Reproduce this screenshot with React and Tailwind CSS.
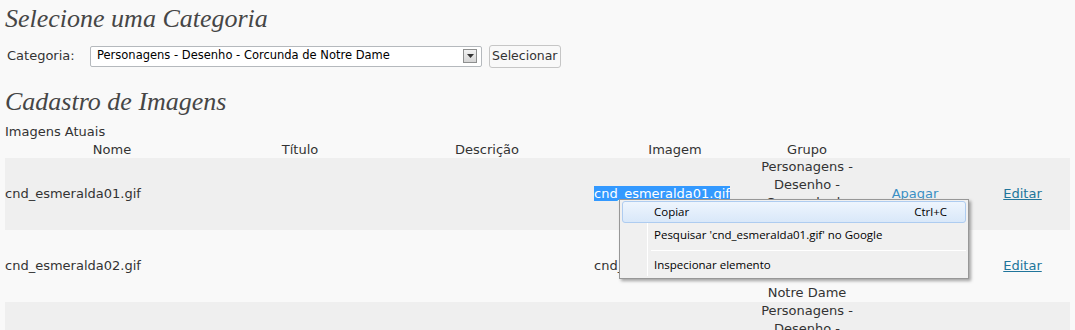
import React from 'react'

const body = { fontFamily: '"DejaVu Sans", Verdana, sans-serif' }
const serif = { fontFamily: '"Liberation Serif", Georgia, serif' }
const menuFont = { fontFamily: '"Open Sans", "Noto Sans", sans-serif' }

const cols = 'grid grid-cols-[214px_162px_212px_164px_100px_116px_99px]'

const rows = [
  { file: 'cnd_esmeralda01.gif', bg: 'bg-[#efefef]', selected: true },
  { file: 'cnd_esmeralda02.gif', bg: 'bg-[#f9f9f9]' },
  { file: 'cnd_esmeralda03.gif', bg: 'bg-[#efefef]' },
]

function Row({ r }) {
  return (
    <div className={`${cols} ${r.bg} h-[72px] items-center leading-[18px]`}>
      <div>{r.file}</div>
      <div />
      <div />
      <div className="pl-px">
        {r.selected ? <span className="bg-[#3399ff] text-white">{r.file}</span> : r.file}
      </div>
      <div className="text-center whitespace-nowrap">
        Personagens -<br />Desenho -<br />Corcunda de<br />Notre Dame
      </div>
      <div className="text-center">
        <a className="text-[#3a8fc4] underline">Apagar</a>
      </div>
      <div className="text-center">
        <a className="text-[#21759b] underline">Editar</a>
      </div>
    </div>
  )
}

function ContextMenu() {
  return (
    <div className="absolute left-[619px] top-[199px] w-[350px] border border-[#979797] bg-[#f0f0f0] shadow-[2px_2px_3px_rgba(0,0,0,0.35)] text-[11.5px] text-black px-[2px] pt-px pb-[2px]" style={menuFont}>
      <div className="absolute left-[27px] top-[2px] bottom-[2px] w-px bg-[#e2e3e3] border-r border-white" />
      <div className="relative h-[22px] flex items-center justify-between pl-[31px] pr-[18px] rounded-[3px] border border-[#aeccf0] bg-gradient-to-b from-[#eef5fd] to-[#d9e8f9]">
        <span>Copiar</span><span>Ctrl+C</span>
      </div>
      <div className="relative h-[24px] flex items-center pl-[32px]">Pesquisar 'cnd_esmeralda01.gif' no Google</div>
      <div className="relative h-[7px] flex items-center ml-[29px]">
        <div className="w-full h-px bg-[#e2e3e3] border-b border-white" />
      </div>
      <div className="relative h-[22px] flex items-center pl-[32px]">Inspecionar elemento</div>
    </div>
  )
}

export default function App() {
  return (
    <div className="relative w-[1075px] h-[330px] overflow-hidden bg-[#f9f9f9] text-[#333] text-[13px]" style={body}>
      <div className="px-[5px]">
        <h1 className="italic text-[#464646] text-[26px] pt-[4px] leading-[30px]" style={serif}>Selecione uma Categoria</h1>
        <div className="flex items-center h-[24px] mt-[10px]">
          <span className="ml-[2px] w-[83px]">Categoria:</span>
          <div className="w-[392px] h-[21px] border border-[#b5b9bd] bg-white rounded-[2px] flex items-center justify-between pl-[6px] pr-[4px] text-[11.5px] text-black">
            <span>Personagens - Desenho - Corcunda de Notre Dame</span>
            <div className="w-[14px] h-[14px] border border-[#8e8f8f] bg-gradient-to-b from-[#f2f2f2] to-[#d5d5d5] flex items-center justify-center">
              <svg width="7" height="4" viewBox="0 0 7 4"><path d="M0 0h7L3.5 4z" fill="#333" /></svg>
            </div>
          </div>
          <button className="ml-[7px] h-[23px] px-[2px] border border-[#c6c6c6] rounded-[3px] bg-[#f9f9f9] text-[12.5px] text-[#333]">Selecionar</button>
        </div>
        <h2 className="italic text-[#464646] text-[26px] mt-[19px] leading-[30px]" style={serif}>Cadastro de Imagens</h2>
        <div className="mt-[6px] leading-[18px]">Imagens Atuais</div>
        <div className={`${cols} leading-[17px]`}>
          <div className="text-center">Nome</div>
          <div className="text-center">Título</div>
          <div className="text-center">Descrição</div>
          <div className="text-center">Imagem</div>
          <div className="text-center">Grupo</div>
          <div />
          <div />
        </div>
        {rows.map(r => <Row key={r.file} r={r} />)}
      </div>
      <ContextMenu />
    </div>
  )
}
